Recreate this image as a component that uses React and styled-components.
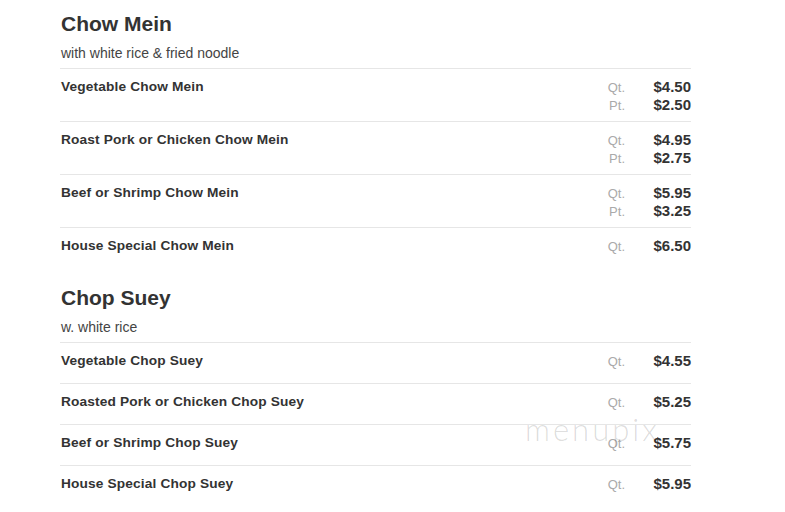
import styled, { createGlobalStyle } from "styled-components";

const sections = [
  {
    title: "Chow Mein",
    note: "with white rice & fried noodle",
    items: [
      { name: "Vegetable Chow Mein", prices: [["Qt.", "$4.50"], ["Pt.", "$2.50"]] },
      { name: "Roast Pork or Chicken Chow Mein", prices: [["Qt.", "$4.95"], ["Pt.", "$2.75"]] },
      { name: "Beef or Shrimp Chow Mein", prices: [["Qt.", "$5.95"], ["Pt.", "$3.25"]] },
      { name: "House Special Chow Mein", prices: [["Qt.", "$6.50"]] },
    ],
  },
  {
    title: "Chop Suey",
    note: "w. white rice",
    items: [
      { name: "Vegetable Chop Suey", prices: [["Qt.", "$4.55"]] },
      { name: "Roasted Pork or Chicken Chop Suey", prices: [["Qt.", "$5.25"]] },
      { name: "Beef or Shrimp Chop Suey", prices: [["Qt.", "$5.75"]] },
      { name: "House Special Chop Suey", prices: [["Qt.", "$5.95"]] },
    ],
  },
];

export default function App() {
  return (
    <>
      <GlobalStyle />
      <Page>
        {sections.map((section) => (
          <Section key={section.title}>
            <Title>{section.title}</Title>
            <Note>{section.note}</Note>
            {section.items.map((item) => (
              <Row key={item.name}>
                <Name>{item.name}</Name>
                <Prices>
                  {item.prices.map(([size, price]) => (
                    <PriceLine key={size}>
                      <Size>{size}</Size>
                      <Price>{price}</Price>
                    </PriceLine>
                  ))}
                </Prices>
              </Row>
            ))}
          </Section>
        ))}
        <Watermark aria-hidden="true">menupix</Watermark>
      </Page>
    </>
  );
}

const GlobalStyle = createGlobalStyle`
  body {
    margin: 0;
    background: #fff;
    font-family: "Liberation Sans", Arial, sans-serif;
    color: #333;
  }
`;

const Page = styled.div`
  position: relative;
  width: 631px;
  padding: 12px 0 0 60px;
`;

const Section = styled.section`
  margin-bottom: 18px;
`;

const Title = styled.h2`
  margin: 0 0 8px 1px;
  font-size: 21px;
  line-height: 24px;
  font-weight: bold;
  color: #333;
`;

const Note = styled.div`
  padding: 0 0 6px 1px;
  font-size: 14px;
  line-height: 18px;
  color: #444;
`;

const Row = styled.div`
  display: flex;
  justify-content: space-between;
  border-top: 1px solid #e6e6e6;
  padding: 9px 0 7px 1px;
`;

const Name = styled.div`
  min-height: 24px;
  font-size: 13.7px;
  line-height: 18px;
  font-weight: bold;
  letter-spacing: 0.15px;
  color: #333;
`;

const Prices = styled.div`
  display: flex;
  flex-direction: column;
`;

const PriceLine = styled.div`
  display: flex;
  align-items: baseline;
  justify-content: flex-end;
  height: 18px;
  line-height: 18px;
`;

const Size = styled.span`
  font-size: 13px;
  color: #aaa;
`;

const Price = styled.span`
  width: 66px;
  text-align: right;
  font-size: 15px;
  font-weight: bold;
  color: #333;
`;

const Watermark = styled.div`
  position: absolute;
  left: 525px;
  top: 410px;
  font-family: Lato, "Liberation Sans", sans-serif;
  font-weight: 300;
  font-size: 31px;
  letter-spacing: 3px;
  color: rgba(0, 0, 0, 0.14);
  pointer-events: none;
`;
